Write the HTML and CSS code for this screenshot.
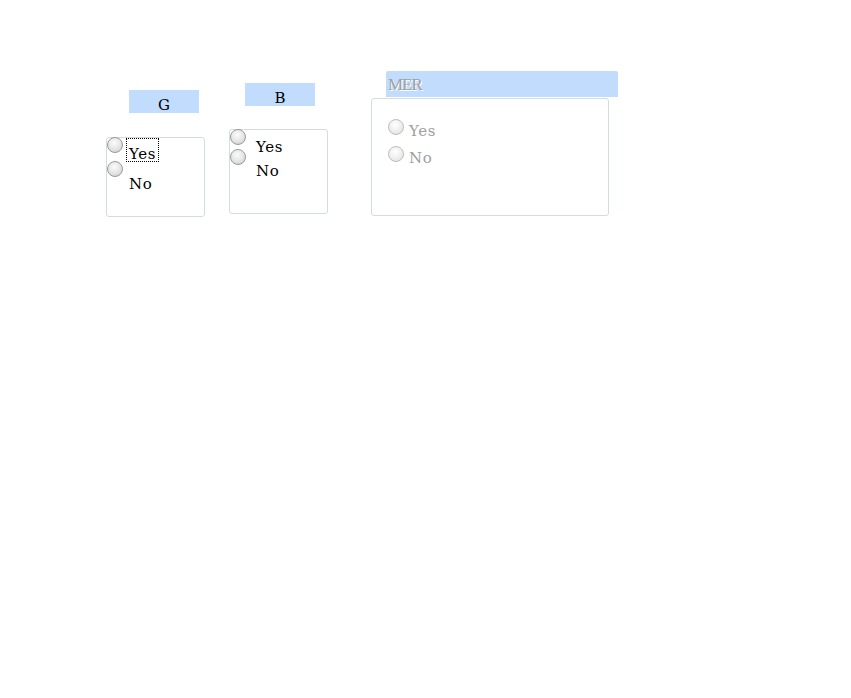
FILE: index.html
```html
<!DOCTYPE html>
<html lang="en">
<head>
    <meta charset="UTF-8">
    <title>Radio groups</title>
    <link rel="stylesheet" href="styles.css">
</head>
<body>
    <div class="row">
        <div class="group group-g">
            <div class="caption">G</div>
            <div class="box">
                <div class="option"><span class="radio"></span><span class="text focused">Yes</span></div>
                <div class="option"><span class="radio"></span><span class="text">No</span></div>
            </div>
        </div>

        <div class="group group-b">
            <div class="caption">B</div>
            <div class="box">
                <div class="option"><span class="radio"></span><span class="text">Yes</span></div>
                <div class="option"><span class="radio"></span><span class="text">No</span></div>
            </div>
        </div>

        <div class="group group-mer disabled">
            <div class="caption">MER</div>
            <div class="box">
                <div class="option"><span class="radio"></span><span class="text">Yes</span></div>
                <div class="option"><span class="radio"></span><span class="text">No</span></div>
            </div>
        </div>
    </div>
</body>
</html>
```

FILE: styles.css
```css
body {
    margin: 0;
    background: #fff;
    color: #000;
    font-family: "DejaVu Serif", "Liberation Serif", serif;
    font-size: 15px;
}

.row {
    display: flex;
    align-items: flex-start;
    padding-left: 106px;
}

.group {
    display: flex;
    flex-direction: column;
}

.caption {
    background: #c2dcfd;
    height: 23px;
    line-height: 30px;
    overflow: hidden;
    text-align: center;
}

.box {
    box-sizing: border-box;
    border: 1px solid #d3dbe3;
    border-radius: 3px;
    background: #fff;
}

.option {
    display: flex;
    align-items: flex-start;
}

.radio {
    box-sizing: border-box;
    width: 16px;
    height: 16px;
    border-radius: 50%;
    border: 1px solid #9a9a9a;
    background: radial-gradient(circle at 45% 35%, #fbfbfb 0%, #e4e4e4 55%, #c6c6c6 100%);
    flex-shrink: 0;
}

.text {
    line-height: 16px;
    letter-spacing: 0.6px;
}

/* G */
.group-g {
    padding-top: 90px;
    width: 99px;
}
.group-g .caption {
    width: 70px;
    margin-left: 23px;
    margin-bottom: 24px;
}
.group-g .box {
    height: 80px;
}
.group-g .radio {
    margin-top: -1px;
}
.group-g .option:first-child {
    height: 24px;
}
.group-g .text {
    margin-left: 3px;
    padding: 8px 3px 0 3px;
    height: 16px;
}
.group-g .option + .option .text {
    padding-top: 14px;
}
.focused {
    outline: 1px dotted #000;
    outline-offset: -1px;
}

/* B */
.group-b {
    padding-top: 83px;
    margin-left: 24px;
    width: 99px;
}
.group-b .caption {
    width: 70px;
    margin-left: 16px;
    margin-bottom: 23px;
}
.group-b .box {
    height: 85px;
}
.group-b .radio {
    margin-top: -1px;
}
.group-b .option:first-child {
    height: 20px;
}
.group-b .text {
    margin-left: 10px;
    padding-top: 9px;
}
.group-b .option + .option .text {
    padding-top: 13px;
}

/* MER */
.group-mer {
    padding-top: 71px;
    margin-left: 43px;
    width: 247px;
}
.group-mer .caption {
    width: 232px;
    height: 26px;
    line-height: 28px;
    margin-left: 15px;
    margin-bottom: 1px;
    text-align: left;
    padding-left: 2px;
    box-sizing: border-box;
    border-radius: 2px 2px 0 0;
    font-family: "Liberation Serif", serif;
    font-size: 17px;
    letter-spacing: -1px;
}
.group-mer .box {
    width: 238px;
    height: 118px;
    padding: 20px 0 0 16px;
}
.group-mer .option:first-child {
    height: 27px;
}
.group-mer .text {
    margin-left: 5px;
    padding-top: 4px;
}

.disabled .caption,
.disabled .text {
    color: #a0a0a0;
    text-shadow: 1px 1px 0 #fff;
}
.disabled .radio {
    border-color: #bdbdbd;
    background: radial-gradient(circle at 45% 35%, #ffffff 0%, #ececec 60%, #d8d8d8 100%);
}
```
